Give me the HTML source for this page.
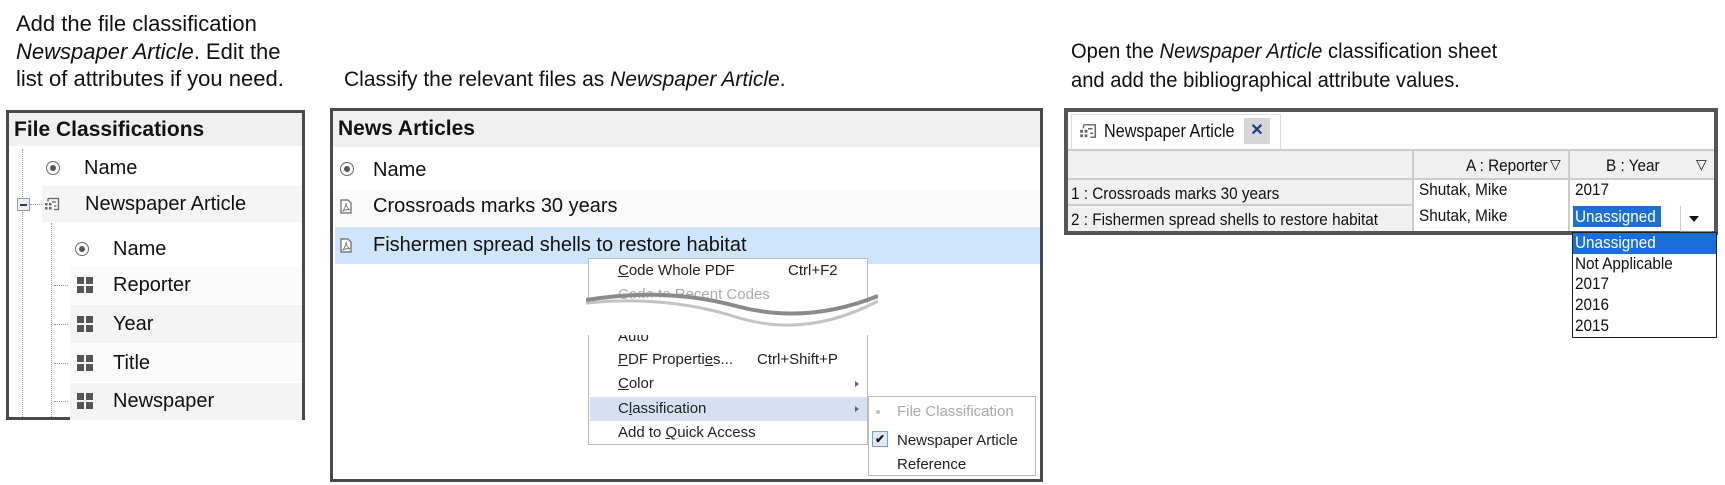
<!DOCTYPE html>
<html><head><meta charset="utf-8"><style>
body{margin:0;width:1725px;height:485px;background:#fff;position:relative;overflow:hidden;font-family:"Liberation Sans",sans-serif;color:#111}
.a{position:absolute;white-space:nowrap}
.ins{font-size:22px;line-height:27.5px;color:#111}
.box{position:absolute;border:3px solid #4a4a4a;box-sizing:border-box;background:#fff}
.t{font-size:20px;line-height:22px}
.m{font-size:15px;color:#222;line-height:18px}
.circ{position:absolute;width:12px;height:12px;border:1.5px solid #666;border-radius:50%}
.circ:after{content:"";position:absolute;left:3px;top:3px;width:6px;height:6px;background:#555;border-radius:50%}
.grid{position:absolute;width:16px;height:16px;background:
linear-gradient(#555,#555) 0 0/7px 7px no-repeat,linear-gradient(#555,#555) 9px 0/7px 7px no-repeat,
linear-gradient(#555,#555) 0 9px/7px 7px no-repeat,linear-gradient(#555,#555) 9px 9px/7px 7px no-repeat}
.r{font-size:17px;line-height:20px;transform:scaleX(.9);transform-origin:left}
</style></head><body>
<svg width="0" height="0" style="position:absolute"><defs>
<symbol id="cls" viewBox="0 0 16 14"><path d="M4 1.5h10.5v11H10M4 1.5v3M8 5h4M10 9h2.5" stroke="#666" stroke-width="1.3" fill="none"/><rect x="1" y="6" width="2.5" height="2.5" fill="#666"/><rect x="5" y="6" width="2.5" height="2.5" fill="#666"/><rect x="1" y="10" width="2.5" height="2.5" fill="#666"/><rect x="5" y="10" width="2.5" height="2.5" fill="#666"/></symbol>
<symbol id="pdf" viewBox="0 0 12 15"><path d="M1 1h7l3 3v10H1z" stroke="#666" stroke-width="1.2" fill="#fff"/><path d="M3 12c2-3 3-5 3-8c0 3 2 6 4 7c-3-1-5 0-7 1z" stroke="#777" stroke-width=".9" fill="none"/></symbol>
</defs></svg>

<div class="a ins" style="left:16px;top:10px">Add the file classification<br><i>Newspaper Article</i>. Edit the<br>list of attributes if you need.</div>
<div class="a ins" style="left:344px;top:66px;font-size:21px">Classify the relevant files as <i>Newspaper Article</i>.</div>
<div class="a ins" style="left:1071px;top:37px;transform:scaleX(.96);transform-origin:left;line-height:29px;font-size:21px">Open the <i>Newspaper Article</i> classification sheet<br>and add the bibliographical attribute values.</div>

<!-- Left panel -->
<div class="box" style="left:6px;top:110px;width:299px;height:310px">
<div class="a" style="left:0;top:0;width:293px;height:33px;background:#f0f0f0"></div>
<div class="a" style="left:5px;top:5px;font-size:21px;font-weight:bold;color:#111">File Classifications</div>
<div class="a" style="left:13px;top:36px;height:268px;border-left:1px dotted #999"></div>
<div class="a" style="left:42px;top:110px;height:194px;border-left:1px dotted #999"></div>
<div class="a" style="left:33px;top:73px;width:260px;height:36px;background:#f5f5f5"></div>
<div class="a" style="left:61px;top:154px;width:232px;height:37px;background:#fafafa"></div>
<div class="a" style="left:61px;top:192px;width:232px;height:38px;background:#f4f4f4"></div>
<div class="a" style="left:61px;top:231px;width:232px;height:38px;background:#fafafa"></div>
<div class="a" style="left:61px;top:270px;width:232px;height:37px;background:#f4f4f4"></div>
<div class="circ" style="left:37px;top:48px"></div><div class="a t" style="left:75px;top:44px">Name</div>
<div class="a" style="left:8px;top:85px;width:11px;height:11px;border:1px solid #999;background:#eef"><div style="position:absolute;left:2px;top:5px;width:7px;height:2px;background:#335"></div></div>
<div class="a" style="left:21px;top:91px;width:12px;border-top:1px dotted #999"></div>
<svg class="a" style="left:35px;top:84px" width="16" height="14"><use href="#cls"/></svg>
<div class="a t" style="left:76px;top:80px">Newspaper Article</div>
<div class="circ" style="left:66px;top:129px"></div><div class="a t" style="left:104px;top:125px">Name</div>
<div class="a" style="left:45px;top:172px;width:14px;border-top:1px dotted #999"></div><div class="grid" style="left:68px;top:164px"></div><div class="a t" style="left:104px;top:161px">Reporter</div>
<div class="a" style="left:45px;top:211px;width:14px;border-top:1px dotted #999"></div><div class="grid" style="left:68px;top:203px"></div><div class="a t" style="left:104px;top:200px">Year</div>
<div class="a" style="left:45px;top:250px;width:14px;border-top:1px dotted #999"></div><div class="grid" style="left:68px;top:242px"></div><div class="a t" style="left:104px;top:239px">Title</div>
<div class="a" style="left:45px;top:288px;width:14px;border-top:1px dotted #999"></div><div class="grid" style="left:68px;top:280px"></div><div class="a t" style="left:104px;top:277px">Newspaper</div>
</div>

<!-- Middle panel -->
<div class="box" style="left:330px;top:108px;width:713px;height:374px">
<div class="a" style="left:0;top:0;width:707px;height:36px;background:#f0f0f0"></div>
<div class="a" style="left:5px;top:6px;font-size:21px;font-weight:bold">News Articles</div>
<div class="circ" style="left:7px;top:51px"></div><div class="a t" style="left:40px;top:48px">Name</div>
<div class="a" style="left:2px;top:78px;width:705px;height:37px;background:#fafafa"></div>
<svg class="a" style="left:7px;top:88px" width="12" height="15"><use href="#pdf"/></svg><div class="a t" style="left:40px;top:84px">Crossroads marks 30 years</div>
<div class="a" style="left:2px;top:116px;width:705px;height:37px;background:#cfe5fb"></div>
<svg class="a" style="left:7px;top:127px" width="12" height="15"><use href="#pdf"/></svg><div class="a t" style="left:40px;top:123px">Fishermen spread shells to restore habitat</div>
</div>

<!-- Context menu -->
<div class="a" style="left:588px;top:258px;width:280px;height:187px;background:#fff;border:1px solid #bbb;box-sizing:border-box"></div>
<div class="a m" style="left:618px;top:262px"><u>C</u>ode Whole PDF</div><div class="a m" style="left:788px;top:262px">Ctrl+F2</div>
<div class="a m" style="left:618px;top:286px;color:#aaa">Code to <u>R</u>ecent Codes</div>
<div class="a m" style="left:618px;top:328px">Auto</div>
<svg class="a" style="left:586px;top:289px" width="292" height="46"><path d="M0 16 Q80 0 150 18 T292 10 L292 46 L0 46Z" fill="#fff"/><path d="M0 11 Q80 -2 150 17 T292 7" stroke="#8a8a8a" stroke-width="4" fill="none"/><path d="M0 14 Q80 6 150 28 T292 12" stroke="#aaa" stroke-width="3" fill="none" opacity=".7"/></svg>
<div class="a m" style="left:618px;top:351px"><u>P</u>DF Properti<u>e</u>s...</div><div class="a m" style="left:757px;top:351px">Ctrl+Shift+P</div>
<div class="a m" style="left:618px;top:375px"><u>C</u>olor</div><div class="a" style="left:855px;top:381px;border-left:4px solid #666;border-top:3px solid transparent;border-bottom:3px solid transparent"></div>
<div class="a" style="left:590px;top:397px;width:277px;height:24px;background:#d5e1f2"></div>
<div class="a m" style="left:618px;top:400px">C<u>l</u>assification</div><div class="a" style="left:855px;top:406px;border-left:4px solid #666;border-top:3px solid transparent;border-bottom:3px solid transparent"></div>
<div class="a m" style="left:618px;top:424px">Add to <u>Q</u>uick Access</div>
<!-- submenu -->
<div class="a" style="left:868px;top:396px;width:168px;height:80px;background:#fff;border:1px solid #bbb;box-sizing:border-box"></div>
<div class="a" style="left:876px;top:410px;width:4px;height:4px;border-radius:50%;background:#bbb"></div>
<div class="a m" style="left:897px;top:403px;color:#aaa">File Classification</div>
<div class="a" style="left:872px;top:431px;width:14px;height:14px;border:1px solid #7a9ccf;background:#dde8f8;font-size:12px;line-height:14px;text-align:center;font-weight:bold">✔</div>
<div class="a m" style="left:897px;top:432px">Newspaper Article</div>
<div class="a m" style="left:897px;top:456px">Reference</div>

<!-- Right panel -->
<div class="box" style="left:1064px;top:108px;width:654px;height:127px;border-width:4px;border-color:#555">
<div class="a" style="left:3px;top:2px;width:208px;height:34px;background:#fff;border:1px solid #ddd;border-bottom:none"></div>
<svg class="a" style="left:11px;top:11px" width="18" height="16"><use href="#cls"/></svg>
<div class="a r" style="left:36px;top:9px;font-size:18px">Newspaper Article</div>
<div class="a" style="left:176px;top:6px;width:26px;height:26px;background:#d6d6d6;color:#1a3a8a;font-weight:bold;font-size:16px;text-align:center;line-height:26px">✕</div>
<div class="a" style="left:0;top:37px;width:646px;height:82px;background:#f0f0f0"></div>
<div class="a" style="left:0;top:37px;width:646px;border-top:2px solid #ccc"></div>
<div class="a" style="left:0;top:66px;width:646px;border-top:2px solid #ccc"></div>
<div class="a" style="left:0;top:92px;width:646px;border-top:2px solid #ccc"></div>
<div class="a" style="left:345px;top:68px;width:301px;height:51px;background:#fff"></div>
<div class="a" style="left:344px;top:37px;height:82px;border-left:2px solid #ccc"></div>
<div class="a" style="left:500px;top:37px;height:82px;border-left:2px solid #ccc"></div>
<div class="a r" style="left:398px;top:44px">A : Reporter</div>
<div class="a" style="left:482px;top:44px;font-size:14px">▽</div>
<div class="a r" style="left:538px;top:44px">B : Year</div>
<div class="a" style="left:628px;top:44px;font-size:14px">▽</div>
<div class="a r" style="left:3px;top:72px">1 : Crossroads marks 30 years</div>
<div class="a r" style="left:3px;top:98px">2 : Fishermen spread shells to restore habitat</div>
<div class="a r" style="left:351px;top:68px">Shutak, Mike</div>
<div class="a r" style="left:351px;top:94px">Shutak, Mike</div>
<div class="a r" style="left:507px;top:68px">2017</div>
<div class="a" style="left:505px;top:94px;width:88px;height:21px;background:#1a6fd8"></div>
<div class="a r" style="left:507px;top:95px;color:#fff">Unassigned</div>
<div class="a" style="left:612px;top:94px;width:31px;height:25px;background:#fff;border-left:1px solid #ccc;border-bottom:1px solid #888"></div>
<div class="a" style="left:621px;top:104px;border-top:6px solid #111;border-left:5px solid transparent;border-right:5px solid transparent"></div>
</div>
<div class="a" style="left:1572px;top:232px;width:145px;height:106px;border:1px solid #222;background:#fff;box-sizing:border-box"></div>
<div class="a" style="left:1573px;top:233px;width:143px;height:21px;background:#1a6fd8"></div>
<div class="a r" style="left:1575px;top:233px;color:#fff">Unassigned</div>
<div class="a r" style="left:1575px;top:254px">Not Applicable</div>
<div class="a r" style="left:1575px;top:274px">2017</div>
<div class="a r" style="left:1575px;top:295px">2016</div>
<div class="a r" style="left:1575px;top:316px">2015</div>
</body></html>
